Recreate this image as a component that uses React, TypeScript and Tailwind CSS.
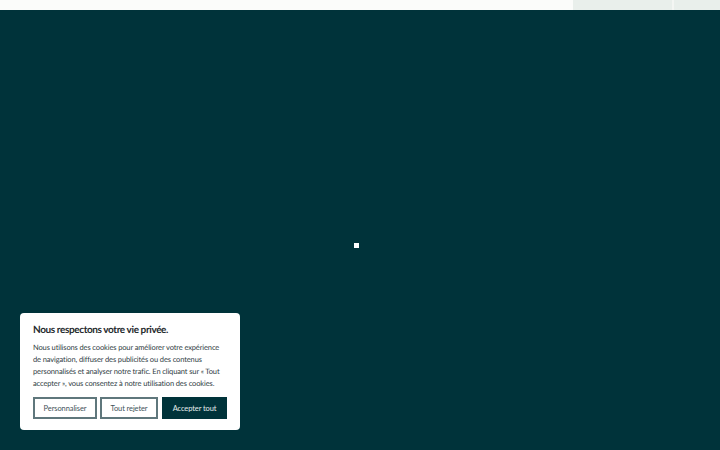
const App = () => {
  return (
    <div className="relative flex h-[450px] w-[720px] flex-col overflow-hidden bg-[#00333a] font-['Lato','Liberation_Sans',sans-serif] [text-rendering:geometricPrecision]">
      <div className="flex h-[10px] justify-end bg-[#fbfcfa]">
        <div className="w-[99px] bg-[#e9efeb]" />
        <div className="w-[2px] bg-[#f4f6f3]" />
        <div className="w-[46px] bg-[#e9efeb]" />
      </div>

      <div className="flex flex-1 pl-[354px] pt-[233px]">
        <div className="h-[5px] w-[5px] bg-white" />
      </div>

      <div className="absolute bottom-5 left-5 w-[220px] rounded-[4px] bg-white pb-[11px] pl-[13px] pr-[13px] pt-[10px]">
        <h2 className="text-[10px] font-bold leading-[14px] tracking-[-0.39px] text-[#1f2a2d]">Nous respectons votre vie privée.</h2>
        <p className="mt-[5px] whitespace-nowrap text-[7.5px] leading-[12px] tracking-[-0.12px] text-[#2f3c3f]">
          Nous utilisons des cookies pour améliorer votre expérience
          <br />
          de navigation, diffuser des publicités ou des contenus
          <br />
          personnalisés et analyser notre trafic. En cliquant sur « Tout
          <br />
          accepter », vous consentez à notre utilisation des cookies.
        </p>
        <div className="mt-[7px] flex gap-[3px]">
          <button className="h-[22px] w-[64px] border-2 border-[#5f777c] bg-white pt-px text-[7.5px] tracking-[-0.1px] text-[#3f5459]">Personnaliser</button>
          <button className="h-[22px] w-[58px] border-2 border-[#5f777c] bg-white pt-px text-[7.5px] tracking-[-0.1px] text-[#3f5459]">Tout rejeter</button>
          <button className="ml-px h-[22px] w-[65px] bg-[#00333a] pt-px text-[7.5px] tracking-[-0.1px] text-[#e6eeee]">Accepter tout</button>
        </div>
      </div>
    </div>
  );
};

export default App;
